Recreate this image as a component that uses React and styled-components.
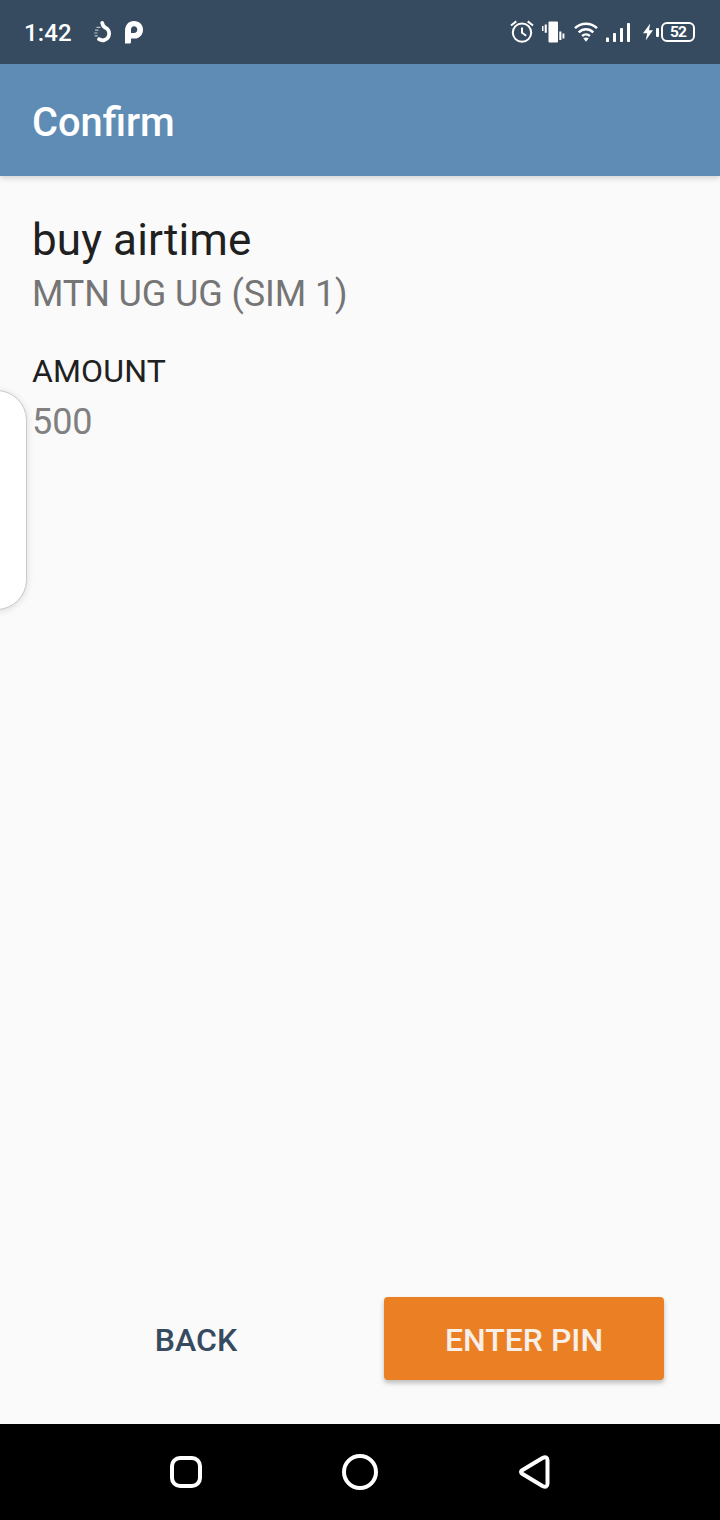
import React from 'react';
import styled, { createGlobalStyle } from 'styled-components';

const GlobalStyle = createGlobalStyle`
    * {
        box-sizing: border-box;
    }

    body {
        margin: 0;
        font-family: Roboto, sans-serif;
    }
`;

const Screen = styled.div`
    position: relative;
    display: flex;
    flex-direction: column;
    width: 720px;
    height: 1520px;
    background: #fafafa;
    overflow: hidden;
`;

const StatusBar = styled.div`
    position: relative;
    z-index: 1;
    display: flex;
    align-items: center;
    height: 64px;
    padding: 0 25px 0 24px;
    background: #364b5f;
    color: #fff;
`;

const Clock = styled.span`
    width: 68px;
    padding-top: 1px;
    font-size: 24px;
    font-weight: 500;
    line-height: 64px;
    letter-spacing: 0.1px;
`;

const StatusGroup = styled.div`
    display: flex;
    align-items: center;
    gap: ${({ $gap }) => $gap};
    margin-left: ${({ $end }) => ($end ? 'auto' : '0')};
`;

const Power = styled.div`
    display: flex;
    align-items: center;
    gap: 2px;
    margin-left: 3px;
`;

const BatteryTip = styled.span`
    width: 3px;
    height: 9px;
    border-radius: 1px;
    background: #fff;
`;

const Battery = styled.span`
    width: 34px;
    height: 20px;
    border: 2px solid #fff;
    border-radius: 6px;
    font-size: 15.5px;
    font-weight: 700;
    line-height: 17px;
    letter-spacing: -0.9px;
    text-align: center;
`;

const AppBar = styled.header`
    display: flex;
    align-items: center;
    height: 112px;
    padding: 6px 32px 0;
    background: #5f8cb5;
    box-shadow: 0 2px 6px rgba(0, 0, 0, 0.17);
`;

const Title = styled.h1`
    margin: 0;
    color: #fff;
    font-size: 39.8px;
    font-weight: 500;
    line-height: 48px;
`;

const Content = styled.main`
    flex: 1;
    padding: 38px 32px 0;
`;

const Action = styled.h2`
    margin: 0;
    color: #202020;
    font-size: 44px;
    font-weight: 400;
    line-height: 52px;
    letter-spacing: 0.1px;
`;

const Label = styled.h3`
    margin: 35px 0 9px;
    color: #202020;
    font-size: 32px;
    font-weight: 400;
    line-height: 40px;
    letter-spacing: 0.15px;
`;

const Value = styled.p`
    margin: ${({ $top }) => $top || '0'} 0 0;
    color: ${({ $light }) => ($light ? '#808080' : '#757575')};
    font-size: 36px;
    line-height: 44px;
    letter-spacing: -0.1px;
`;

const EdgePanel = styled.div`
    position: absolute;
    top: 390px;
    left: -34px;
    width: 61px;
    height: 220px;
    border: 1px solid #c9c9c9;
    border-radius: 32px;
    background: #fff;
    box-shadow: 0 1px 7px rgba(0, 0, 0, 0.13);
`;

const Actions = styled.div`
    display: flex;
    justify-content: space-between;
    padding: 0 56px 44px;
`;

const Button = styled.button`
    width: 280px;
    height: 83px;
    padding: 2px 0 0;
    border: 0;
    border-radius: 4px;
    background: ${({ $primary }) => ($primary ? '#eb7f24' : 'transparent')};
    box-shadow: ${({ $primary }) => ($primary ? '0 3px 5px rgba(0, 0, 0, 0.25)' : 'none')};
    color: ${({ $primary }) => ($primary ? '#f8efe9' : '#364b5f')};
    font-family: inherit;
    font-size: 32px;
    font-weight: 500;
`;

const NavBar = styled.nav`
    display: flex;
    align-items: center;
    justify-content: space-between;
    height: 96px;
    padding: 0 168px;
    background: #000;
`;

const NavIcon = styled.svg`
    width: 36px;
    height: 36px;
    fill: none;
    stroke: #fff;
    stroke-width: 4;
    stroke-linejoin: round;
`;

const SwirlIcon = () => (
    <svg width="20" height="24" viewBox="0 0 20 24" fill="none" stroke="#fff">
        <path d="M10.2 3Q10.6 5.8 13.2 7.6A6.6 6.6 0 1 1 7 19.2" strokeWidth="3.8" strokeLinecap="round" />
        <path d="M4.5 7.3h4M3 10.2h3.5M2.2 13h3.3M2.6 15.8h3.2" strokeWidth="1.2" opacity="0.65" />
    </svg>
);

const PIcon = () => (
    <svg width="20" height="24" viewBox="0 0 20 24">
        <path fill="#fff" fillRule="evenodd" d="M1 23.5V11C1 5 4.5 1 10 1C15.5 1 19 4.5 19 9.7C19 14.8 15.5 18.5 10.5 18.5H7V22Q7 23.5 5.5 23.5ZM10 6.3C8 6.3 7 7.8 7 9.8V13H10C12 13 13.3 11.5 13.3 9.7C13.3 7.8 12 6.3 10 6.3Z" />
    </svg>
);

const AlarmIcon = () => (
    <svg width="24" height="24" viewBox="0 0 24 24" fill="none" stroke="#fff" strokeWidth="2">
        <circle cx="12" cy="12.6" r="9.2" />
        <path d="M12 7.5v5.2l4.2 3M1 5.5L6.3 1.4M17.7 1.4L23 5.5" />
    </svg>
);

const VibrateIcon = () => (
    <svg width="24" height="24" viewBox="1 0 24 24" fill="#fff">
        <rect x="7.5" y="1.5" width="9.5" height="21" rx="1" />
        <path d="M1 6h1.5v5H1zM3.7 4.5h2.1v8.3H3.7zM18.3 11.5h2.1v8.5h-2.1zM21.5 13.5h1.9v5h-1.9z" />
    </svg>
);

const WifiIcon = () => (
    <svg width="24" height="24" viewBox="0 0 24 24" fill="none" stroke="#fff" strokeWidth="2.5">
        <path d="M1 8.2C7.2 2.3 16.8 2.3 23 8.2M4.7 12.3C9 8.3 15 8.3 19.3 12.3M8.1 16C10.4 13.9 13.6 13.9 15.9 16" />
        <path d="M9.3 18.2Q12 16.7 14.7 18.2L12 21.8Z" fill="#fff" stroke="none" />
    </svg>
);

const SignalIcon = () => (
    <svg width="26" height="24" viewBox="0 0 26 24" fill="#fff">
        <rect x="0" y="17.5" width="3" height="4.5" rx="0.8" />
        <rect x="7" y="13" width="3" height="9" rx="0.8" />
        <rect x="14" y="8" width="3" height="14" rx="0.8" />
        <rect x="21" y="3" width="3" height="19" rx="0.8" />
    </svg>
);

const BoltIcon = () => (
    <svg width="11" height="18" viewBox="0 0 11 18" fill="#fff">
        <path d="M7.2 .5L0 10.2H4.2L2.7 17.5L10 7.3H6Z" />
    </svg>
);

const App = () => (
    <>
        <GlobalStyle />
        <Screen>
            <StatusBar>
                <Clock>1:42</Clock>
                <StatusGroup $gap="12px">
                    <SwirlIcon />
                    <PIcon />
                </StatusGroup>
                <StatusGroup $gap="8px" $end>
                    <AlarmIcon />
                    <VibrateIcon />
                    <WifiIcon />
                    <SignalIcon />
                    <Power>
                        <BoltIcon />
                        <BatteryTip />
                        <Battery>52</Battery>
                    </Power>
                </StatusGroup>
            </StatusBar>
            <AppBar>
                <Title>Confirm</Title>
            </AppBar>
            <Content>
                <Action>buy airtime</Action>
                <Value $top="6px">MTN UG UG (SIM 1)</Value>
                <Label>AMOUNT</Label>
                <Value $light>500</Value>
            </Content>
            <Actions>
                <Button>BACK</Button>
                <Button $primary>ENTER PIN</Button>
            </Actions>
            <NavBar>
                <NavIcon viewBox="0 0 36 36">
                    <rect x="4" y="4" width="28" height="28" rx="8" />
                </NavIcon>
                <NavIcon viewBox="0 0 36 36">
                    <circle cx="18" cy="18" r="16" />
                </NavIcon>
                <NavIcon viewBox="0 0 36 36">
                    <path d="M6.2 16.2L26.5 4Q31.5 1.8 31.5 6.5V29.5Q31.5 34.2 26.5 32L6.2 19.8Q3.8 18 6.2 16.2Z" />
                </NavIcon>
            </NavBar>
            <EdgePanel />
        </Screen>
    </>
);

export default App;
